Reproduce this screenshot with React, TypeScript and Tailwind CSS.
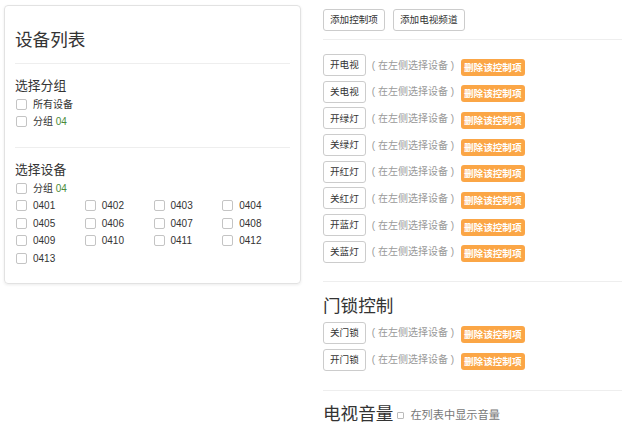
const font = { fontFamily: '"Liberation Sans", "Noto Sans CJK SC", sans-serif' };

function Box({ small }: { small?: boolean }) {
  return (
    <span
      className={
        small
          ? "inline-block w-[7px] h-[7px] border border-[#bbb] rounded-[1px] bg-white"
          : "inline-block w-[11px] h-[11px] border border-[#c4c4c4] rounded-[2px] bg-white shrink-0"
      }
    />
  );
}

function Check({ children }: { children: React.ReactNode }) {
  return (
    <div className="flex items-center h-[17px] pl-[1px]">
      <Box />
      <span className="ml-[6px] text-[10px] text-[#333]">{children}</span>
    </div>
  );
}

function Group04() {
  return (
    <>
      分组 <span className="text-[#4a8a3a]">04</span>
    </>
  );
}

function Row({ name }: { name: string }) {
  return (
    <div className="flex items-center h-[22px]">
      <button className="h-[22px] px-[6px] border border-[#ccc] rounded-[3px] bg-white text-[9.6px] text-[#333] leading-none">
        {name}
      </button>
      <span className="ml-[6px] text-[10px] text-[#999]">( 在左侧选择设备 )</span>
      <span className="ml-[7px] mt-[4px] h-[17px] px-[3px] rounded-[3px] bg-[#fba646] text-white text-[9.6px] font-bold leading-[17px]">
        删除该控制项
      </span>
    </div>
  );
}

const devices = [
  "0401", "0402", "0403", "0404",
  "0405", "0406", "0407", "0408",
  "0409", "0410", "0411", "0412",
  "0413",
];

const tvRows = ["开电视", "关电视", "开绿灯", "关绿灯", "开红灯", "关红灯", "开蓝灯", "关蓝灯"];

export default function App() {
  return (
    <div className="w-[633px] h-[422px] overflow-hidden bg-white flex items-start pt-[5px] pl-[4px]" style={font}>
      {/* device list panel */}
      <div className="w-[297px] border border-[#e2e2e2] rounded-[4px] shadow-[0_1px_3px_rgba(0,0,0,0.08)] px-[10px] pt-[21px] pb-[16px]">
        <h2 className="h-[26px] leading-[26px] text-[17.6px] text-[#333]">设备列表</h2>
        <div className="mt-[10px] h-px bg-[#eee]" />
        <div className="pt-[13px]">
          <div className="h-[18px] leading-[18px] text-[12.8px] text-[#333]">选择分组</div>
          <div className="mt-[1px]">
            <Check>所有设备</Check>
            <Check>
              <Group04 />
            </Check>
          </div>
        </div>
        <div className="mt-[17px] h-px bg-[#eee]" />
        <div className="pt-[13px]">
          <div className="h-[18px] leading-[18px] text-[12.8px] text-[#333]">选择设备</div>
          <div className="mt-[1px]">
            <Check>
              <Group04 />
            </Check>
          </div>
          <div className="grid grid-cols-4 auto-rows-[17.5px]">
            {devices.map((d) => (
              <Check key={d}>{d}</Check>
            ))}
          </div>
        </div>
      </div>

      {/* controls column */}
      <div className="ml-[22px] w-[299px] pt-[4px]">
        <div className="flex gap-[8px]">
          <button className="h-[22px] px-[6px] border border-[#ccc] rounded-[3px] bg-white text-[9.6px] text-[#333] leading-none">
            添加控制项
          </button>
          <button className="h-[22px] px-[6px] border border-[#ccc] rounded-[3px] bg-white text-[9.6px] text-[#333] leading-none">
            添加电视频道
          </button>
        </div>
        <div className="mt-[8px] h-px bg-[#eee]" />
        <div className="mt-[14px] flex flex-col gap-[4.7px]">
          {tvRows.map((r) => (
            <Row key={r} name={r} />
          ))}
        </div>
        <div className="mt-[18px] h-px bg-[#eee]" />
        <h3 className="mt-[11px] h-[26px] leading-[26px] text-[17.6px] text-[#333]">门锁控制</h3>
        <div className="mt-[3px] flex flex-col gap-[4.7px]">
          <Row name="关门锁" />
          <Row name="开门锁" />
        </div>
        <div className="mt-[19px] h-px bg-[#eee]" />
        <div className="mt-[10px] flex items-center h-[26px]">
          <span className="text-[17.6px] text-[#333] leading-[26px]">电视音量</span>
          <span className="ml-[4px] mt-[4px] flex">
            <Box small />
          </span>
          <span className="ml-[6px] mt-[4px] text-[11.2px] text-[#777]">在列表中显示音量</span>
        </div>
      </div>
    </div>
  );
}
